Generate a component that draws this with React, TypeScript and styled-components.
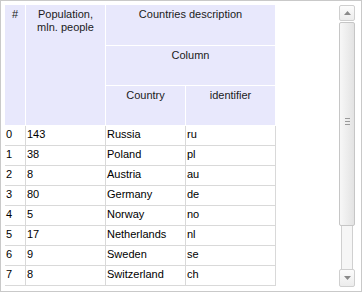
import React from "react";
import styled, { createGlobalStyle } from "styled-components";

type Country = {
  idx: number;
  population: number;
  name: string;
  code: string;
};

const countries: Country[] = [
  { idx: 0, population: 143, name: "Russia", code: "ru" },
  { idx: 1, population: 38, name: "Poland", code: "pl" },
  { idx: 2, population: 8, name: "Austria", code: "au" },
  { idx: 3, population: 80, name: "Germany", code: "de" },
  { idx: 4, population: 5, name: "Norway", code: "no" },
  { idx: 5, population: 17, name: "Netherlands", code: "nl" },
  { idx: 6, population: 9, name: "Sweden", code: "se" },
  { idx: 7, population: 8, name: "Switzerland", code: "ch" },
];

const GlobalStyle = createGlobalStyle`
  html, body {
    margin: 0;
    padding: 0;
    background: #ffffff;
  }
  body {
    font-family: "Liberation Sans", Arial, sans-serif;
    font-size: 11px;
    color: #000000;
  }
`;

const FrameDiv = styled.div`
  box-sizing: border-box;
  width: 362px;
  height: 292px;
  border: 1px solid #c9c9c9;
  padding: 4px 6px 4px 4px;
  display: flex;
  overflow: hidden;
`;

const TableAreaDiv = styled.div`
  flex: 1;
`;

const GridTable = styled.table`
  width: 271px;
  table-layout: fixed;
  border-collapse: separate;
  border-spacing: 0;
`;

const HeadCell = styled.th<{ $height?: number }>`
  box-sizing: border-box;
  height: ${(p) => p.$height ?? 40}px;
  padding: 3px 2px 0;
  background: #e8e8fc;
  border-right: 1px solid #ffffff;
  border-bottom: 1px solid #ffffff;
  font-weight: normal;
  font-size: 11px;
  line-height: 13px;
  color: #1b1b1b;
  text-align: center;
  vertical-align: top;
  white-space: normal;
`;

const BodyCell = styled.td`
  box-sizing: border-box;
  height: 20px;
  padding: 1px 1px 0;
  border-right: 1px solid #d9d9d9;
  border-bottom: 1px solid #d9d9d9;
  font-size: 11px;
  line-height: 14px;
  vertical-align: top;
  white-space: nowrap;
  overflow: hidden;
`;

const ScrollBarDiv = styled.div`
  width: 16px;
  display: flex;
  flex-direction: column;
`;

const ArrowButton = styled.div<{ $height: number }>`
  box-sizing: border-box;
  height: ${(p) => p.$height}px;
  border: 1px solid #cfcfcf;
  border-radius: 2px;
  background: linear-gradient(to bottom, #fcfcfc, #ececec);
  display: flex;
  align-items: center;
  justify-content: center;
`;

const ThumbDiv = styled.div`
  box-sizing: border-box;
  height: 204px;
  margin-top: 1px;
  border: 1px solid #c6c6c6;
  border-radius: 2px;
  background: linear-gradient(to right, #f7f7f7, #e3e3e3);
  display: flex;
  align-items: center;
  justify-content: center;
`;

const GripDiv = styled.div`
  display: flex;
  flex-direction: column;
  gap: 2px;
  margin-top: -6px;
`;

const GripLine = styled.div`
  width: 5px;
  height: 1px;
  background: #9a9a9a;
`;

const TrackDiv = styled.div`
  flex: 1;
  margin: 0 2px;
  border-left: 1px solid #d0d0d0;
  border-right: 1px solid #d0d0d0;
  background: #f6f6f6;
`;

const Arrow = ({ up }: { up?: boolean }) => (
  <svg width="7" height="4" viewBox="0 0 7 4">
    <polygon
      points={up ? "3.5,0 7,4 0,4" : "0,0 7,0 3.5,4"}
      fill="#8a8a8a"
    />
  </svg>
);

const App = () => {
  return (
    <>
      <GlobalStyle />
      <FrameDiv>
        <TableAreaDiv>
          <GridTable>
            <colgroup>
              <col style={{ width: 21 }} />
              <col style={{ width: 80 }} />
              <col style={{ width: 80 }} />
              <col style={{ width: 90 }} />
            </colgroup>
            <thead>
              <tr>
                <HeadCell rowSpan={3} $height={41}>#</HeadCell>
                <HeadCell rowSpan={3} $height={41}>
                  Population,
                  <br />
                  mln. people
                </HeadCell>
                <HeadCell colSpan={2} $height={41}>
                  Countries description
                </HeadCell>
              </tr>
              <tr>
                <HeadCell colSpan={2}>Column</HeadCell>
              </tr>
              <tr>
                <HeadCell>Country</HeadCell>
                <HeadCell>identifier</HeadCell>
              </tr>
            </thead>
            <tbody>
              {countries.map((c) => (
                <tr key={c.idx}>
                  <BodyCell>{c.idx}</BodyCell>
                  <BodyCell>{c.population}</BodyCell>
                  <BodyCell>{c.name}</BodyCell>
                  <BodyCell>{c.code}</BodyCell>
                </tr>
              ))}
            </tbody>
          </GridTable>
        </TableAreaDiv>
        <ScrollBarDiv>
          <ArrowButton $height={16}>
            <Arrow up />
          </ArrowButton>
          <ThumbDiv>
            <GripDiv>
              <GripLine />
              <GripLine />
              <GripLine />
            </GripDiv>
          </ThumbDiv>
          <TrackDiv />
          <ArrowButton $height={18}>
            <Arrow />
          </ArrowButton>
        </ScrollBarDiv>
      </FrameDiv>
    </>
  );
};

export default App;
